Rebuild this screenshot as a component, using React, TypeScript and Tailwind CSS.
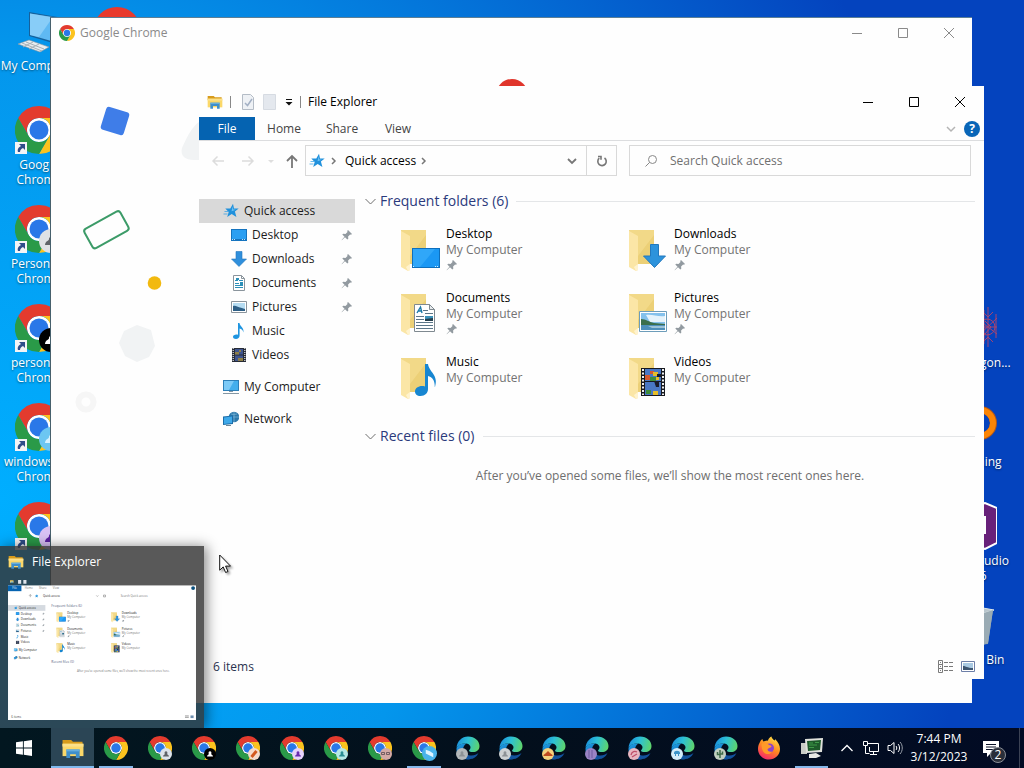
import type { ReactNode, SVGProps } from "react";

type Svg = SVGProps<SVGSVGElement>;

/* ---------- brand icons ---------- */

function ChromeLogo(props: Svg) {
  return (
    <svg viewBox="0 0 48 48" aria-hidden="true" {...props}>
      <circle cx="24" cy="24" r="12" fill="#fff" />
      <path fill="#e33b2e" d="M24,12H44.7812a23.9939,23.9939,0,0,0-41.5639.0029L13.6079,30l.0093-.0024A11.9852,11.9852,0,0,1,24,12Z" />
      <path fill="#fcc31e" d="M34.3913,30.0029,24.0007,48A23.994,23.994,0,0,0,44.78,12.0031H23.9989l-.0025.0093A11.985,11.985,0,0,1,34.3913,30.0029Z" />
      <path fill="#2a9a48" d="M13.6086,30.0031,3.218,12.006A23.994,23.994,0,0,0,24.0025,48L34.3931,30.0029l-.0067-.0068a11.9852,11.9852,0,0,1-20.7778.007Z" />
      <circle cx="24" cy="24" r="9.5" fill="#2a78e8" />
    </svg>
  );
}

function EdgeLogo(props: Svg) {
  return (
    <svg viewBox="0 0 48 48" aria-hidden="true" {...props}>
      <defs>
        <linearGradient id="edgeTop" x1="0" y1="0.4" x2="1" y2="0.6">
          <stop offset="0" stopColor="#1b8fdc" />
          <stop offset="0.45" stopColor="#2cc0d6" />
          <stop offset="1" stopColor="#5fd56a" />
        </linearGradient>
        <linearGradient id="edgeMid" x1="0" y1="0" x2="0.5" y2="1">
          <stop offset="0" stopColor="#1ea0e4" />
          <stop offset="1" stopColor="#125fb0" />
        </linearGradient>
      </defs>
      <path fill="url(#edgeMid)" d="M1 25c1-7 10-11 20-10-4 2-7 7-7 13 0 9 7 16 15 18-2 1-4 1-6 1C10 47 0 37 1 25z" />
      <path fill="#12529c" d="M14 26c1 9 8 13 17 13 6 0 10-2 14-5-4 9-12 13-18 12C20 45 14 37 14 26z" />
      <path fill="url(#edgeTop)" d="M1 24C2 10 12 1 24 1c14 0 23 9 23 19 0 8-6 12-13 12-5 0-8-1-8-3 0-1 3-3 3-6 0-5-5-8-10-8C10 15 3 19 1 24z" />
    </svg>
  );
}

function FirefoxLogo(props: Svg) {
  return (
    <svg viewBox="0 0 48 48" aria-hidden="true" {...props}>
      <defs>
        <linearGradient id="foxBody" x1="0.8" y1="0" x2="0.3" y2="1">
          <stop offset="0" stopColor="#ffe14a" />
          <stop offset="0.5" stopColor="#ff8a1f" />
          <stop offset="1" stopColor="#f5256b" />
        </linearGradient>
      </defs>
      <path fill="url(#foxBody)" d="M5 14c1-3 3-6 6-8 0 2 1 4 2 5 4-2 7-1 9-2 1-4 4-7 7-8 0 4 3 6 6 8 1 0 1-2 1-3 6 5 10 13 10 20C46 38 36 47 24 47S2 38 2 26c0-5 1-9 3-12z" />
      <circle cx="25" cy="24" r="9" fill="#8d43c9" />
      <path fill="#ff9a28" d="M9 16c4-3 11-3 15 2 3 1 5 1 5 3s-7 3-8 6c1 4 5 5 9 4-3 6-11 7-16 2-4-4-5-11-5-17z" />
      <path fill="#ffd33d" d="M29 1c0 6 10 9 11 20 0 5-2 8-5 11 9-8 5-18-6-25z" />
    </svg>
  );
}

function WindowsLogo(props: Svg) {
  return (
    <svg viewBox="0 0 16 16" fill="#fff" aria-hidden="true" {...props}>
      <path d="M0 2.3 6.9 1.3V7.6H0zM7.8 1.2 16 0V7.6H7.8zM0 8.4H6.9V14.7L0 13.7zM7.8 8.4H16V16L7.8 14.8z" />
    </svg>
  );
}

function ExplorerIcon(props: Svg) {
  return (
    <svg viewBox="0 0 24 20" aria-hidden="true" {...props}>
      <path fill="#d79b1c" d="M1 1h9l2 2h10v4H1z" />
      <path fill="#fbd869" d="M1 5h22v13H1z" />
      <path fill="#fbe08a" d="M1 5h22v3H1z" />
      <path fill="#3f8fcb" d="M5 11h14v9h-4v-4H9v4H5z" />
      <path fill="#66aede" d="M5 11h14v2H5z" />
    </svg>
  );
}

/* ---------- file system icons ---------- */

function StarIcon(props: Svg) {
  return (
    <svg viewBox="0 0 16 16" aria-hidden="true" {...props}>
      <path fill="#2191dc" d="m10 .8 1 4.600h4.700l-3.800 3 1.500 5.600-4.700-2.900-4.500 3 1.500-5L2.300 5.600l5-.2z" />
      <path fill="#2c9ee6" d="M1.500 8h3.500v1H1.500zM.5 10.500h4v1h-4z" opacity="0.7" />
      <path fill="#70c3f4" d="m9.700 3.500.6 2.900 2.700.3-4.500 1.600z" />
    </svg>
  );
}

function DesktopIcon(props: Svg) {
  return (
    <svg viewBox="0 0 16 16" aria-hidden="true" {...props}>
      <path fill="#1574bf" d="M0 2h16v12H0z" />
      <path fill="#2b9ff2" d="M1 3h14v9H1z" />
      <path stroke="#bfe3fb" strokeDasharray="1 1" d="M1 12.500h3M11 12.500h4" />
    </svg>
  );
}

function DownArrowIcon(props: Svg) {
  return (
    <svg viewBox="0 0 16 16" aria-hidden="true" {...props}>
      <path fill="#2f8fdc" stroke="#2377bd" strokeWidth="0.600" d="M5 .5h6V8h4.500L8 15.500.5 8H5z" />
    </svg>
  );
}

function DocumentIcon(props: Svg) {
  return (
    <svg viewBox="0 0 16 16" aria-hidden="true" {...props}>
      <path fill="#fff" stroke="#8a949c" d="M2.500.5h8l3 3v12h-11z" />
      <path fill="none" stroke="#8a949c" d="M10.500.5v3h3" />
      <path fill="none" stroke="#2c8fb8" d="M4 5.500h3M8 5.500h4M4 8.500h4M4 10.500h8M4 12.500h8" />
      <path fill="#2c8fb8" d="M9 7h3v3H9zM5 3h3v2H5z" />
    </svg>
  );
}

function PictureIcon(props: Svg) {
  return (
    <svg viewBox="0 0 16 16" aria-hidden="true" {...props}>
      <path fill="#fff" stroke="#8a949c" d="M.5 2.500h15v11H.5z" />
      <path fill="#b5dcf2" d="M2 4h12v8H2z" />
      <path fill="#2d5f86" d="M2 7c3-1 4 1 7 1.500S13 10 14 10v2H2z" />
    </svg>
  );
}

function MusicIcon(props: Svg) {
  return (
    <svg viewBox="0 0 16 16" aria-hidden="true" {...props}>
      <path fill="#1f95e0" d="M7 0h1.500c.3 3.500 5 4.500 3.800 9.500C12 7 10.500 6 8.600 5.600V12.500C8.600 14.600 7 16 5 16c-1.700 0-3-.8-3-2.200C2 12 4.500 11 7 11.700z" />
    </svg>
  );
}

function FilmIcon(props: Svg) {
  return (
    <svg viewBox="0 0 16 16" aria-hidden="true" {...props}>
      <path fill="#262b36" d="M1 1h14v14H1z" />
      <path stroke="#e4e4e4" strokeWidth="1.200" strokeDasharray="1 1" d="M2.200 1v14M13.800 1v14" />
      <path fill="#3f558f" d="M4 2h8v5.500H4zM4 8.500h8V14H4z" />
      <path fill="#8f8046" d="M4 5h4v2.500H4zM7 11h5v3H7zM8 3h2v2H8z" />
    </svg>
  );
}

function ComputerIcon(props: Svg) {
  return (
    <svg viewBox="0 0 16 16" aria-hidden="true" {...props}>
      <path fill="#2c7fb8" d="M0 1h16v11H0z" />
      <path fill="#43aeec" d="M1 2h14v9H1z" />
      <path fill="#7ccaf7" d="M1 2h10L6 11H1z" />
      <path fill="#8497a4" d="M6 12h4v1H6zM0 14h16v1H0z" />
    </svg>
  );
}

function NetworkIcon(props: Svg) {
  return (
    <svg viewBox="0 0 16 16" aria-hidden="true" {...props}>
      <circle cx="11" cy="6" r="5.300" fill="#2e79ab" />
      <path fill="none" stroke="#7fb9da" strokeWidth="0.700" d="M8 3c3 1 5 0 6 0M7 6h9M11 1v10" />
      <path fill="#1b6da9" d="m0 5.500 10-1v8.500L0 14z" />
      <path fill="#3ea9ea" d="m1 6.500 8-1V12l-8 1z" />
      <path fill="#6f8797" d="M3 14h5v1H3z" />
    </svg>
  );
}

function PinIcon(props: Svg) {
  return (
    <svg viewBox="0 0 12 12" fill="#929aa0" aria-hidden="true" {...props}>
      <path d="m7 1 4 4-1 .8-.9-.3-2 2 .2 2.300L6.300 10.600 4 8.300.800 11.300.600 11 3.500 7.800 1.300 5.600l.9-.8 2.300.1 2-2L6.200 2z" />
    </svg>
  );
}

function Folder() {
  return (
    <>
      <path fill="#ecd077" d="M3 4h25v34H10z" />
      <path fill="#f5dd90" d="M3 4h25v5L12 30z" opacity="0.7" />
      <path fill="#fbe6a6" d="M3 5l9 5v34l-2 1-7-4z" />
      <path fill="#fff3cf" d="M8 41l4-3v6l-2 1z" />
    </>
  );
}

const overlays: Record<string, ReactNode> = {
  Desktop: (
    <>
      <path fill="#0d6fbd" d="M14 22h28v20H14z" />
      <path fill="#1b98f4" d="M15 23h26v18H15z" />
      <path fill="#3fb0fb" d="M15 23h22L22 41h-7z" opacity="0.6" />
      <path stroke="#d8eefc" strokeDasharray="1 1" d="M15 40.500h2M37 40.500h4" />
    </>
  ),
  Downloads: <path fill="#2d93dc" stroke="#2379be" d="M24.500 18.500h8V30h7L28.500 41.500 17.500 30h7z" />,
  Documents: (
    <>
      <path fill="#fff" stroke="#7f8990" d="M16.500 14.500h15l5 5v22h-20z" />
      <path fill="#e8ecef" stroke="#7f8990" d="M31.500 14.500v5h5z" />
      <path fill="none" stroke="#1d7aa8" strokeWidth="1.400" d="m19 23 3.500-6 1.500 6M20.500 21h3" />
      <path stroke="#5b7688" d="M25 20.500h5M18 26.500h8M18 29.500h8M18 32.500h17M18 35.500h17M18 38.500h17M27 23.500h8" />
      <path fill="#3b91b9" d="M27 26h8v5h-8z" />
      <path fill="#263f4d" d="M27 29l8-1v3h-8z" />
    </>
  ),
  Pictures: (
    <>
      <path fill="#fff" stroke="#6d9dba" d="M13.500 21.500h27v20h-27z" />
      <path fill="#84c1ec" d="M15 23h24v17H15z" />
      <path fill="#e5f3fb" d="M20 25c6-1 12 2 19 1v6H24z" />
      <path fill="#3b6f4c" d="M15 29c5 0 8 3 13 4l11 1v1H15z" />
      <path fill="#4d8fba" d="M15 35h24v5H15z" />
      <path fill="#9cc3d8" d="M22 36h17v2H26z" />
    </>
  ),
  Music: (
    <path fill="#1786d1" d="M27 10h3c1 8 11 11 7 23-.5 0 1-9-7-11v13c0 4-3 7-7.500 7-3.500 0-5.500-2-5.500-4.500 0-4 5-6.500 10-5z" />
  ),
  Videos: (
    <>
      <path fill="#17191f" d="M15 14h24v28H15z" />
      <path stroke="#f0f0f0" strokeWidth="2" strokeDasharray="2 1.500" d="M17 15v26M37 15v26" />
      <path fill="#4a78c4" d="M19 15h16v12H19zM19 28h16v13H19z" />
      <path fill="#d5582e" d="M19 21h5v5h-5zM24 17h4v3h-4z" />
      <path fill="#e7bd29" d="M27 18h5v4h-5zM30 23h3v3h-3zM27 37h5v4h-5z" />
      <path fill="#3f8d3b" d="M24 23h6v4h-6zM20 36h5v4h-5z" />
      <path fill="#1a1c2a" d="M28 27h5v6h-3zM31 20h4v3h-4z" />
    </>
  ),
};

function FolderTileIcon({ name, ...props }: Svg & { name: string }) {
  return (
    <svg viewBox="0 0 48 48" aria-hidden="true" {...props}>
      <Folder />
      {overlays[name]}
    </svg>
  );
}

/* ---------- data ---------- */

const quickLinks = [
  { name: "Desktop", Icon: DesktopIcon, pinned: true },
  { name: "Downloads", Icon: DownArrowIcon, pinned: true },
  { name: "Documents", Icon: DocumentIcon, pinned: true },
  { name: "Pictures", Icon: PictureIcon, pinned: true },
  { name: "Music", Icon: MusicIcon, pinned: false },
  { name: "Videos", Icon: FilmIcon, pinned: false },
];

const folders = [
  { name: "Desktop", pinned: true },
  { name: "Downloads", pinned: true },
  { name: "Documents", pinned: true },
  { name: "Pictures", pinned: true },
  { name: "Music", pinned: false },
  { name: "Videos", pinned: false },
];

const emptyNote = "After you’ve opened some files, we’ll show the most recent ones here.";

/* ---------- desktop ---------- */

function Shortcut({ lines, children }: { lines: string[]; children: ReactNode }) {
  return (
    <li className="h-[99px] w-[76px]">
      <a href="#" className="flex flex-col items-center gap-[3px] whitespace-nowrap text-center leading-[15px] text-white [text-shadow:0_1px_2px_rgba(0,0,0,0.5)]">
        {children}
        <span>
          {lines.map((line) => (
            <span key={line} className="block">{line}</span>
          ))}
        </span>
      </a>
    </li>
  );
}

function ChromeShortcutIcon({ badge, figure }: { badge?: string; figure?: string }) {
  return (
    <svg viewBox="0 0 48 48" className="size-12" aria-hidden="true">
      <ChromeLogo x="0" y="0" width="48" height="48" />
      {badge && <circle cx="36" cy="36" r="12" fill={badge} />}
      {badge && <path fill={figure} d="M30 40c0-4 4-4 4-6 0-3 5-3 5 0 0 2 4 2 4 6z" />}
      <path fill="#f4f4f6" d="M0 36h12v12H0z" />
      <path fill="#2f4d8a" d="M4 38h6v6L8 42c-2 1-3 2-3 4H3c-1-3 1-5 3-6z" />
    </svg>
  );
}

const chromeShortcuts = [
  { lines: ["Google", "Chrome"] },
  { lines: ["Person 1 -", "Chrome"], badge: "#dfe1e5", figure: "#5f6368" },
  { lines: ["personal -", "Chrome"], badge: "#000", figure: "#fff" },
  { lines: ["windows10 -", "Chrome"], badge: "#6cc6f2", figure: "#d7f2ff" },
  { lines: [] as string[], badge: "#d9c2f5", figure: "#5b1fa0" },
];

function DesktopIcons() {
  return (
    <>
      <ul className="absolute left-px top-[7px]">
        <Shortcut lines={["My Computer"]}>
          <svg viewBox="0 0 48 48" className="size-12" aria-hidden="true">
            <path fill="#16619c" d="M14 5 48 11v28L14 29z" />
            <path fill="#5fb9f3" d="M15 6.500 47 12v25L15 28z" />
            <path fill="#a3dafb" d="M15 6.500 38 10 24 30l-9-2z" opacity="0.6" />
            <path fill="#e9edf0" stroke="#8a979f" strokeWidth="0.600" d="m3 37 11-4 20 7-9 5z" />
            <path stroke="#a7b0b6" d="m7 36 20 8M11 35l18 7M8 40l10-5M14 42l10-5" />
          </svg>
        </Shortcut>
        {chromeShortcuts.map((item, i) => (
          <Shortcut key={i} lines={item.lines}>
            <ChromeShortcutIcon badge={item.badge} figure={item.figure} />
          </Shortcut>
        ))}
      </ul>

      <svg viewBox="0 0 48 48" className="absolute left-[93px] top-[7px] size-12" aria-hidden="true">
        <circle cx="24" cy="24" r="24" fill="#e8392c" />
      </svg>

      <ul className="absolute right-[13px] top-[304px]">
        <Shortcut lines={["3D Octagon..."]}>
          <svg viewBox="0 0 48 48" className="size-12" fill="none" stroke="#a8446f" aria-hidden="true">
            <path d="M39 3v40M34 8l5 5 5-5M34 38l5-5 5 5M30 16l18 14M48 14 30 31M47 10v24M35 6v34M30 23h18M36 17l6 6-6 7M12 18l24 12" />
            <circle cx="38" cy="23" r="8" />
          </svg>
        </Shortcut>
        <Shortcut lines={["Streaming"]}>
          <svg viewBox="0 0 48 48" className="size-12" fill="none" aria-hidden="true">
            <circle cx="31" cy="20" r="13.500" stroke="#b3591a" strokeWidth="7" />
            <circle cx="31" cy="20" r="13" stroke="#fb8506" strokeWidth="6" />
          </svg>
        </Shortcut>
        <Shortcut lines={["Visual Studio", "2026"]}>
          <svg viewBox="0 0 48 48" className="size-12" aria-hidden="true">
            <path fill="#68217a" stroke="#fff" strokeWidth="2" d="m1 12 11-4L36 1l12 5v35l-12 6L1 36z" />
            <path fill="#fff" d="M28 14h9v18h-9z" />
          </svg>
        </Shortcut>
        <Shortcut lines={["Recycle Bin"]}>
          <svg viewBox="0 0 48 48" className="size-12" aria-hidden="true">
            <path fill="#8fa3ad" d="m5 9 39 0-5 34-25 2z" />
            <path fill="#b9c6cd" stroke="#dfe7ea" d="m5 9 18-4 22 4-13 4z" />
            <path fill="#9aabb4" d="m32 13 12-4-5 33-7 3z" />
          </svg>
        </Shortcut>
      </ul>
    </>
  );
}

/* ---------- windows ---------- */

function WindowControls() {
  return (
    <div className="flex self-stretch">
      <button type="button" aria-label="Minimize" className="flex w-[46px] items-center justify-center">
        <svg viewBox="0 0 10 10" className="size-[10px]" stroke="currentColor"><path d="M0 5.500h10" /></svg>
      </button>
      <button type="button" aria-label="Maximize" className="flex w-[46px] items-center justify-center">
        <svg viewBox="0 0 10 10" className="size-[10px]" fill="none" stroke="currentColor"><path d="M.5.5h9v9h-9z" /></svg>
      </button>
      <button type="button" aria-label="Close" className="flex w-[46px] items-center justify-center">
        <svg viewBox="0 0 10 10" className="size-[10px]" stroke="currentColor"><path d="m0 0 10 10M10 0 0 10" /></svg>
      </button>
    </div>
  );
}

function ChromeWindow() {
  return (
    <section aria-label="Google Chrome" className="absolute left-[50px] top-[17px] flex h-[686px] w-[922px] flex-col overflow-hidden border-l border-t border-l-[#46606c] border-t-[#5c7f96] bg-[#fefefe]">
      <header className="flex h-[30px] shrink-0 items-center pl-2 text-[#8a8a8a]">
        <ChromeLogo className="size-4" />
        <h2 className="ml-[5px] grow">Google Chrome</h2>
        <WindowControls />
      </header>
      <svg viewBox="-1 0 500 400" width="500" height="400" className="shrink-0" aria-hidden="true">
        <rect x="51" y="61" width="24" height="24" rx="3" transform="rotate(17 63 73)" fill="#3f7de8" />
        <rect x="34" y="171" width="41" height="22" rx="3" transform="rotate(-29 54 182)" fill="none" stroke="#3c9b68" strokeWidth="2" />
        <circle cx="102.500" cy="235" r="6.800" fill="#f2b90f" />
        <path fill="#f1f3f4" d="m85 277 14 5 4 16-6 11-12 5-12-6-6-13 5-12z" />
        <circle cx="34" cy="354" r="7.500" fill="none" stroke="#f6f6f6" strokeWidth="6" />
        <path fill="#f1f3f4" d="M150 72c-8 4-14 14-20 28-2 8 3 12 12 12h8z" />
        <circle cx="460" cy="47" r="16" fill="#e0352b" />
      </svg>
    </section>
  );
}

function SectionHeader({ title }: { title: string }) {
  return (
    <div className="flex h-6 items-center">
      <button type="button" aria-expanded="true" className="flex items-center gap-1 whitespace-nowrap text-sm leading-6 text-[#2b3a7c]">
        <svg viewBox="0 0 11 11" className="size-[11px]" fill="none" stroke="#6f6f6f"><path d="M.5 3 5.500 8 10.500 3" /></svg>
        {title}
      </button>
      <span className="ml-2 h-px grow bg-[#e4e6e8]" />
    </div>
  );
}

function ExplorerWindow() {
  return (
    <section aria-label="File Explorer" className="absolute left-[199px] top-[86px] flex h-[593px] w-[785px] flex-col bg-[#fefefe] text-[#1c1c1c]">
      <header className="flex h-[31px] shrink-0 items-center pl-2 pr-px">
        <ExplorerIcon className="h-[14px] w-4" />
        <span className="ml-[7px] h-3 w-px bg-[#888]" />
        <button type="button" aria-label="Properties" className="ml-[10px]">
          <svg viewBox="0 0 14 16" className="h-4 w-[14px]" fill="none"><path fill="#eef1f5" stroke="#b4bcc6" d="M1.500.5h8l3 3v12h-11z" /><path stroke="#a3b0c4" strokeWidth="1.500" d="m4 9 2.500 2.500L11 5" /></svg>
        </button>
        <button type="button" aria-label="New folder" className="ml-2">
          <svg viewBox="0 0 14 16" className="h-4 w-[14px]"><path fill="#e4e8ee" stroke="#d6dbe2" d="M.5.5h12v15H.5z" /></svg>
        </button>
        <button type="button" aria-label="Customize toolbar" className="ml-2">
          <svg viewBox="0 0 8 8" className="size-2" fill="#111"><path d="M1 1h6v1H1zM.5 4h7L4 7.500z" /></svg>
        </button>
        <span className="ml-[7px] h-3 w-px bg-[#888]" />
        <h2 className="ml-[7px] grow text-black">File Explorer</h2>
        <div className="flex self-stretch text-black"><WindowControls /></div>
      </header>

      <nav aria-label="Ribbon" className="flex h-6 shrink-0 items-center border-b border-[#dcdddf] pr-1 text-[#444]">
        <button type="button" className="h-full w-14 bg-[#0563b1] text-white">File</button>
        <button type="button" className="h-full w-[58px]">Home</button>
        <button type="button" className="h-full w-[58px]">Share</button>
        <button type="button" className="h-full w-[54px]">View</button>
        <button type="button" aria-label="Expand ribbon" className="ml-auto mr-2">
          <svg viewBox="0 0 10 10" className="size-[10px]" fill="none" stroke="#b4b4b4" strokeWidth="1.500"><path d="m1 3 4 4 4-4" /></svg>
        </button>
        <button type="button" aria-label="Help" className="flex size-4 items-center justify-center rounded-full bg-[#0966b8] font-bold leading-4 text-white">?</button>
      </nav>

      <div className="flex h-[35px] shrink-0 items-end pr-[13px] pt-[5px]">
        <div className="flex h-full w-[106px] items-center pl-3">
          <button type="button" aria-label="Back"><svg viewBox="0 0 14 14" className="size-[14px]" fill="none" stroke="#dcdcdc" strokeWidth="1.500"><path d="M13 7H2M6.500 2.500 2 7l4.500 4.500" /></svg></button>
          <button type="button" aria-label="Forward" className="ml-4"><svg viewBox="0 0 14 14" className="size-[14px]" fill="none" stroke="#dcdcdc" strokeWidth="1.500"><path d="M1 7h11M7.500 2.500 12 7l-4.500 4.500" /></svg></button>
          <button type="button" aria-label="Recent locations" className="ml-3"><svg viewBox="0 0 8 8" className="size-2" fill="#dedede"><path d="M1 3h6L4 6z" /></svg></button>
          <button type="button" aria-label="Up" className="ml-[10px]"><svg viewBox="0 0 14 14" className="size-[14px]" fill="none" stroke="#777" strokeWidth="1.800"><path d="M7 14V2M2 7l5-5 5 5" /></svg></button>
        </div>
        <div className="flex h-[31px] w-[312px] shrink-0 items-center border border-[#d9d9d9]">
          <StarIcon className="ml-[3px] size-4" />
          <svg viewBox="0 0 8 8" className="ml-[5px] size-2" fill="none" stroke="#777" strokeWidth="1.500"><path d="m2 1 3 3-3 3" /></svg>
          <a href="#" className="ml-[7px] whitespace-nowrap text-black">Quick access</a>
          <svg viewBox="0 0 8 8" className="ml-1 size-2" fill="none" stroke="#777" strokeWidth="1.500"><path d="m2 1 3 3-3 3" /></svg>
          <button type="button" aria-label="Previous locations" className="ml-auto px-[9px]"><svg viewBox="0 0 10 10" className="size-[10px]" fill="none" stroke="#777" strokeWidth="1.800"><path d="m1 3 4 4 4-4" /></svg></button>
          <button type="button" aria-label="Refresh" className="flex h-full w-[30px] items-center justify-center border-l border-[#d9d9d9]">
            <svg viewBox="0 0 12 12" className="size-3" fill="none" stroke="#777" strokeWidth="1.600"><path d="M8.500 3A4.200 4.200 0 1 1 3.300 3.200M2 1.500h3v3.200" /></svg>
          </button>
        </div>
        <label className="ml-3 flex h-[31px] min-w-0 grow items-center border border-[#d9d9d9] pl-[15px]">
          <svg viewBox="0 0 12 12" className="size-3 shrink-0" fill="none" stroke="#888"><circle cx="7.500" cy="4.500" r="4" /><path d="M4.600 7.400.5 11.500" /></svg>
          <input type="search" aria-label="Search Quick access" placeholder="Search Quick access" className="ml-[13px] min-w-0 grow bg-transparent outline-none placeholder:text-[#707070]" />
        </label>
      </div>

      <div className="flex min-h-0 grow">
        <nav aria-label="Folders" className="w-[156px] shrink-0 pt-[23px]">
          <a href="#" className="flex h-6 items-center gap-[5px] bg-[#d9d9d9] pl-6"><StarIcon className="size-4" />Quick access</a>
          <ul>
            {quickLinks.map(({ name, Icon, pinned }) => (
              <li key={name}>
                <a href="#" className="flex h-6 items-center gap-[5px] pl-8 pr-[2px]">
                  <Icon className="size-4" />
                  <span className="grow">{name}</span>
                  {pinned && <PinIcon className="size-3" />}
                </a>
              </li>
            ))}
          </ul>
          <a href="#" className="mt-2 flex h-6 items-center gap-[5px] pl-6"><ComputerIcon className="size-4" />My Computer</a>
          <a href="#" className="mt-2 flex h-6 items-center gap-[5px] pl-6"><NetworkIcon className="size-4" />Network</a>
        </nav>
        <main className="min-w-0 grow pl-[10px] pr-[9px] pt-[13px]">
          <SectionHeader title="Frequent folders (6)" />
          <ul className="grid grid-cols-[228px_228px] gap-y-4 pl-[33px] pt-[13px]">
            {folders.map(({ name, pinned }) => (
              <li key={name} className="h-12">
                <a href="#" className="flex">
                  <FolderTileIcon name={name} className="size-12 shrink-0" />
                  <span className="flex flex-col leading-4">
                    <span className="text-black">{name}</span>
                    <span className="text-[#737373]">My Computer</span>
                    {pinned && <PinIcon className="mt-px size-3" />}
                  </span>
                </a>
              </li>
            ))}
          </ul>
          <div className="pt-[22px]"><SectionHeader title="Recent files (0)" /></div>
          <p className="pt-5 text-center text-[#6e6e6e]">{emptyNote}</p>
        </main>
      </div>

      <footer className="flex h-6 shrink-0 items-center pb-px pl-[14px] pr-[9px] text-[#2a3350]">
        <span className="grow">6 items</span>
        <button type="button" aria-label="Details view">
          <svg viewBox="0 0 16 13" className="h-[13px] w-4" fill="none" stroke="#7a7a7a"><path d="M.5.5h4v4h-4zM.5 4.500h4v4h-4zM.5 8.500h4v4h-4zM2 2.500h1M2 6.500h1M2 10.500h1" /><path strokeDasharray="4 1" d="M6 2.500h10M6 6.500h10M6 10.500h10" /></svg>
        </button>
        <button type="button" aria-label="Large icons view" className="ml-[7px]">
          <svg viewBox="0 0 14 12" className="h-3 w-[14px]"><path fill="#fff" stroke="#6d7fa8" d="M.5.5h13v10H.5z" /><path fill="#a9c9e2" d="M2 2h10v7H2z" /><path fill="#3d5570" d="M2 5c3 0 4 2 10 2v2H2z" /></svg>
        </button>
      </footer>
    </section>
  );
}

/* ---------- task bar ---------- */

function WindowThumbnail() {
  return (
    <svg viewBox="0 0 785 593" className="block h-[142px] w-[188px]" fontSize="12" aria-hidden="true">
      <rect y="31" width="785" height="562" fill="#fff" />
      <ExplorerIcon x="8" y="8" width="16" height="14" />
      <path fill="#dfe4ea" d="M42 8h13v16H42zM64 8h13v16H64z" />
      <rect y="31" width="56" height="24" fill="#0563b1" />
      <g fill="#777">
        <text x="18" y="47" fill="#fff">File</text>
        <text x="70" y="47">Home</text>
        <text x="129" y="47">Share</text>
        <text x="187" y="47">View</text>
        <text x="146" y="79" fill="#222">Quick access</text>
        <text x="471" y="79">Search Quick access</text>
      </g>
      <circle cx="773" cy="42" r="8" fill="#0a4f7d" />
      <path fill="none" stroke="#666" strokeWidth="2" d="M93 80V70M88 74l5-5 5 5M369 73l4 4 4-4M399 71h8v8h-8z" />
      <StarIcon x="111" y="67" width="16" height="16" />
      <rect y="113" width="156" height="24" fill="#d5dae0" />
      <StarIcon x="24" y="117" width="16" height="16" />
      <text x="45" y="129" fill="#222">Quick access</text>
      {quickLinks.map(({ name, Icon, pinned }, i) => (
        <g key={name}>
          <Icon x="32" y={141 + i * 24} width="16" height="16" />
          <text x="53" y={153 + i * 24} fill="#222">{name}</text>
          {pinned && <PinIcon x="142" y={143 + i * 24} width="12" height="12" />}
        </g>
      ))}
      <ComputerIcon x="24" y="293" width="16" height="16" />
      <text x="45" y="305" fill="#222">My Computer</text>
      <NetworkIcon x="24" y="325" width="16" height="16" />
      <text x="45" y="337" fill="#222">Network</text>
      <text x="181" y="121" fontSize="14" fill="#555e80">Frequent folders (6)</text>
      {folders.map(({ name, pinned }, i) => {
        const x = 199 + (i % 2) * 228;
        const y = 140 + Math.floor(i / 2) * 64;
        return (
          <g key={name}>
            <FolderTileIcon name={name} x={x} y={y} width="48" height="48" />
            <text x={x + 48} y={y + 12} fill="#111">{name}</text>
            <text x={x + 48} y={y + 28} fill="#777">My Computer</text>
            {pinned && <PinIcon x={x + 48} y={y + 33} width="12" height="12" />}
          </g>
        );
      })}
      <text x="181" y="356" fontSize="14" fill="#555e80">Recent files (0)</text>
      <text x="288" y="394" fill="#777">{emptyNote}</text>
      <text x="14" y="585" fill="#444">6 items</text>
      <path stroke="#7a7a7a" strokeWidth="3" d="M739 576h16M739 582h16" />
      <rect x="762" y="574" width="13" height="11" fill="#6d8fb0" />
    </svg>
  );
}

function TaskPreview() {
  return (
    <aside aria-label="File Explorer preview" className="absolute bottom-10 left-0 w-[204px] bg-[#353535]/82 px-2 pb-2 shadow-[3px_0_12px_rgba(0,0,0,0.45)]">
      <div className="flex h-8 items-center gap-2 text-white">
        <ExplorerIcon className="h-[14px] w-4" />
        File Explorer
      </div>
      <WindowThumbnail />
    </aside>
  );
}

type Badge = { fill: string; figure: ReactNode };

const person = (fill: string) => <path fill={fill} d="M3 8.500C3 7 4.800 7 4.800 6 4.200 4.500 4.800 3.300 6 3.300S7.800 4.500 7.200 6c0 1 1.800 1 1.800 2.500z" />;

const chromeBadges: (Badge | null)[] = [
  null,
  { fill: "#dde3ea", figure: person("#5f6368") },
  { fill: "#000", figure: person("#fff") },
  { fill: "#f6dccb", figure: <path stroke="#d2591f" strokeWidth="3" d="m3.500 9 5-6" /> },
  { fill: "#e7d3fa", figure: person("#6a2bb0") },
  { fill: "#b5e9e6", figure: person("#2a8f94") },
  { fill: "#d3a9a4", figure: <path fill="none" stroke="#5a4a50" strokeWidth="0.800" d="M1.500 4.500h3v2h-3zM6.500 4.500h3v2h-3z" /> },
  { fill: "#49b3ea", figure: <path fill="#dff4ff" d="m3 3 3 1 3 2v3L7 8 5 7 3 6z" /> },
];

const edgeBadges: Badge[] = [
  { fill: "#b4b8ba", figure: person("#8d9296") },
  { fill: "#cdd1d3", figure: person("#8d9296") },
  { fill: "#f6d27d", figure: <path fill="#bf4a20" d="M1.500 7 4 5l2-2 2 2 2.500 2v1h-9z" /> },
  { fill: "#9a84c4", figure: <path stroke="#7d68ac" strokeWidth="1.500" d="M4 2v8M7 2v8" /> },
  { fill: "#e8b6c0", figure: <path fill="none" stroke="#c0506a" strokeWidth="1.300" d="M3 7c1-4 4-4 6-3M4 9l5-3" /> },
  { fill: "#d3ecfa", figure: <path fill="#3b93c8" d="M3 5c0-3 6-3 6 0v1H3zM4 6h1v2H4zM7 6h1v2H7z" /> },
  { fill: "#c2cfc0", figure: <path fill="none" stroke="#3e6b48" strokeWidth="1.500" d="M6 2v8M3.500 4v2.500H6M8.500 3.500V6H6" /> },
];

function TaskButton({ label, wide, active, underlined, children }: { label: string; wide?: boolean; active?: boolean; underlined?: boolean; children: ReactNode }) {
  return (
    <button
      type="button"
      aria-label={label}
      className={`relative flex h-10 shrink-0 items-center justify-center ${wide ? "w-11" : "w-[43px]"} ${active ? "bg-[#2b4555]" : ""}`}
    >
      {children}
      {active && <span className="absolute inset-x-0 bottom-0 h-[2px] bg-[#7fb9ee]" />}
      {underlined && <span className="absolute inset-x-[5px] bottom-0 h-[2px] bg-[#86b7ea]" />}
    </button>
  );
}

function Taskbar() {
  return (
    <footer className="absolute inset-x-0 bottom-0 flex h-10 bg-gradient-to-r from-[#021720] via-[#030f1c] to-[#020b24] text-white">
      <button type="button" aria-label="Start" className="flex w-[51px] shrink-0 items-center justify-center pr-[3px]">
        <WindowsLogo className="size-4" />
      </button>
      <TaskButton label="File Explorer" active><ExplorerIcon className="h-[19px] w-6" /></TaskButton>
      {chromeBadges.map((badge, i) => (
        <TaskButton key={i} label={`Chrome ${i + 1}`} wide underlined={i === 0 || i === 7}>
          <svg viewBox="0 0 26 26" className="size-[26px]" aria-hidden="true">
            <ChromeLogo x="1" y="1" width="24" height="24" />
            {badge && (
              <svg x={i === 7 ? 11 : 13} y={i === 7 ? 11 : 13} width={i === 7 ? 15 : 12} height={i === 7 ? 15 : 12} viewBox="0 0 12 12">
                <circle cx="6" cy="6" r="6" fill={badge.fill} />
                {badge.figure}
              </svg>
            )}
          </svg>
        </TaskButton>
      ))}
      {edgeBadges.map((badge, i) => (
        <TaskButton key={i} label={`Edge ${i + 1}`}>
          <svg viewBox="0 0 24 24" className="size-6" aria-hidden="true">
            <EdgeLogo width="24" height="24" />
            <svg y="12" width="12" height="12" viewBox="0 0 12 12">
              <circle cx="6" cy="6" r="6" fill={badge.fill} />
              {badge.figure}
            </svg>
          </svg>
        </TaskButton>
      ))}
      <TaskButton label="Firefox"><FirefoxLogo className="size-6" /></TaskButton>
      <TaskButton label="Remote computer" underlined>
        <svg viewBox="0 0 24 22" className="h-[22px] w-6" aria-hidden="true">
          <path fill="#c9ccc6" d="M1 6h6v11H1z" />
          <path fill="#dfe1db" d="m5 2 18-1-1 14-16 1z" />
          <path fill="#1d5a2a" d="m7 4 14-1-1 10-12 1z" />
          <path stroke="#3f9a49" d="M9 6h4M9 8h8M9 10.500h5M15 5.500h4" />
          <path fill="#e9eae6" d="m9 17 7-1 5 3-5 2H9z" />
        </svg>
      </TaskButton>

      <div className="ml-auto flex shrink-0 items-center">
        <button type="button" aria-label="Show hidden icons" className="flex w-6 justify-center">
          <svg viewBox="0 0 14 14" className="size-[14px]" fill="none" stroke="#fff" strokeWidth="1.300"><path d="m1.500 10 5.500-5.500L12.500 10" /></svg>
        </button>
        <button type="button" aria-label="Network" className="flex w-6 justify-center">
          <svg viewBox="0 0 16 16" className="size-4" fill="none" stroke="#fff"><path d="M4.500 3.500h11v8h-9V7M10.500 11.500v3M7 14.500h7M.5 1.500h4v4h-4zM2.500 5.500v8h4" /></svg>
        </button>
        <button type="button" aria-label="Volume" className="flex w-[23px] justify-center">
          <svg viewBox="0 0 16 16" className="size-4" fill="none" stroke="#fff"><path d="M1 5.500h2.500L7 2.500v11l-3.500-3H1zM9 6c1 1 1 3 0 4M11 4c2 2 2 6 0 8" /><path stroke="#9aa0aa" d="M13 2c3 3 3 9 0 12" /></svg>
        </button>
        <time className="w-[66px] text-center leading-[18px]">
          <span className="block">7:44 PM</span>
          <span className="block">3/12/2023</span>
        </time>
        <button type="button" aria-label="Notifications" className="relative flex w-[42px] justify-center pr-1">
          <svg viewBox="0 0 17 17" className="size-[17px]"><path fill="#fff" d="M0 1h16v12H8l-4 4v-4H0z" /><path stroke="#0a1228" d="M3 4.500h10M3 7h10M3 9.500h10" /></svg>
          <span className="absolute left-[18px] top-[7px] flex size-4 items-center justify-center rounded-full border border-[#8b8f97] bg-[#2a2f3a] leading-4">2</span>
        </button>
        <span className="mr-1 ml-[5px] h-10 w-px bg-[#3b4254]" />
      </div>
    </footer>
  );
}

export default function App() {
  return (
    <div className="relative h-screen overflow-hidden bg-[radial-gradient(ellipse_95%_130%_at_0%_65%,#00aeff_0%,#0496ec_45%,#0443be_100%)] font-['Open_Sans','Noto_Sans',sans-serif] text-[12px] leading-4">
      <DesktopIcons />
      <ChromeWindow />
      <ExplorerWindow />
      <TaskPreview />
      <Taskbar />
      <svg viewBox="0 0 13 20" className="pointer-events-none absolute left-[219px] top-[554px] h-5 w-[13px] drop-shadow-[2px_2px_1px_rgba(0,0,0,0.35)]" aria-hidden="true">
        <path fill="#fff" stroke="#111" d="M.7 1v15.200l3.500-3.300 2.400 5.600 2.400-1-2.400-5.400h4.900z" />
      </svg>
    </div>
  );
}
